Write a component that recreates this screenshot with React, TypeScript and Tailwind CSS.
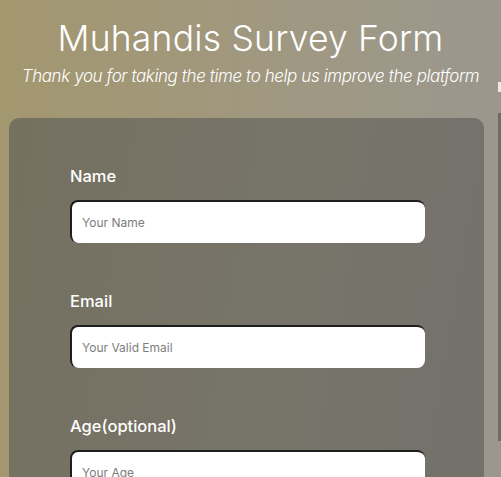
export default function App() {
  const fields = [
    { label: 'Name', placeholder: 'Your Name', type: 'text' },
    { label: 'Email', placeholder: 'Your Valid Email', type: 'email' },
    { label: 'Age(optional)', placeholder: 'Your Age', type: 'number' },
  ];

  return (
    <div
      className="relative h-[477px] w-full overflow-hidden bg-[linear-gradient(90deg,#a3976f_0%,#a0987f_50%,#9b978e_100%)] text-white"
      style={{ fontFamily: 'Inter, "Noto Sans", sans-serif' }}
    >
      {/* Header */}
      <header className="flex flex-col items-center pt-[15px]">
        <h1 className="text-[35.5px] font-light leading-[48px] tracking-[0.2px]">Muhandis Survey Form</h1>
        <p className="mt-[1px] text-[17px] font-light italic leading-[24px] tracking-[-0.4px]">
          Thank you for taking the time to help us improve the platform
        </p>
      </header>

      {/* Card */}
      <form className="mx-[9px] mt-[30px] w-[475px] rounded-[10px] bg-[linear-gradient(100deg,#757160_0%,#77746a_60%,#72716b_100%)] px-[61px] pb-10 pt-[46px]">
        {fields.map((f) => (
          <div key={f.label} className="mb-[46px]">
            <label className="block text-[16.5px] font-medium leading-[24px]">{f.label}</label>
            <input
              type={f.type}
              placeholder={f.placeholder}
              className="mt-[12px] block h-[43px] w-[355px] rounded-[8px] border-l-2 border-t-2 border-[#1e1e1e] bg-white px-[10px] text-[12px] text-[#333] placeholder-[#7d7d7d] outline-none"
            />
          </div>
        ))}
      </form>

      {/* edge of the next panel peeking in */}
      <div className="absolute left-[498px] top-[82px] h-[10px] w-[3px] bg-white/80" />
      <div className="absolute left-[498px] top-[113px] h-[328px] w-[3px] bg-[#6e6c66]" />
    </div>
  );
}
